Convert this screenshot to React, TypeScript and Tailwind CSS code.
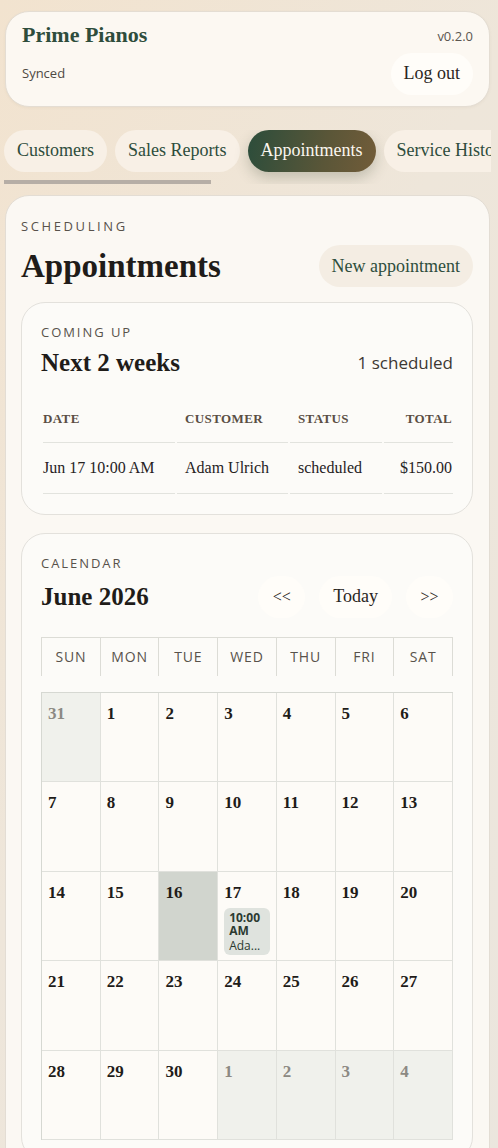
import { useState } from 'react';

const serif = "font-['Liberation_Serif',Georgia,serif]";
const sans = "font-['Open_Sans','Noto_Sans',sans-serif]";

type Appointment = {
  date: string;
  customer: string;
  status: string;
  total: string;
};

const upcoming: Appointment[] = [
  { date: 'Jun 17 10:00 AM', customer: 'Adam Ulrich', status: 'scheduled', total: '$150.00' },
];

const tabs = ['Customers', 'Sales Reports', 'Appointments', 'Service History'];
const weekdays = ['Sun', 'Mon', 'Tue', 'Wed', 'Thu', 'Fri', 'Sat'];

type Day = { n: number; outside?: boolean; today?: boolean; event?: { time: string; who: string } };

// June 2026 starts on a Monday; pad with May 31 and July 1-4
const days: Day[] = [
  { n: 31, outside: true },
  ...Array.from({ length: 30 }, (_, i) => ({ n: i + 1 }) as Day),
  { n: 1, outside: true },
  { n: 2, outside: true },
  { n: 3, outside: true },
  { n: 4, outside: true },
].map((d, i) => {
  if (i === 16) return { ...d, today: true };
  if (i === 17) return { ...d, event: { time: '10:00 AM', who: 'Ada...' } };
  return d;
});

const cellLine = 'border-b border-[#e2e3de]';

export default function App() {
  const [active, setActive] = useState('Appointments');

  return (
    <div className="min-h-screen w-[498px] overflow-hidden bg-[linear-gradient(120deg,#f2e3cf_0%,#eee6da_45%,#ebe6de_100%)] pl-[5px] pr-[8px] pt-[11px]">
      <header className="rounded-[24px] border border-[#e4ddd3] bg-[#fcf8f2] px-[16px] pb-[11px] pt-[12px] shadow-[0_1px_3px_rgba(120,100,70,0.06)]">
        <div className="flex items-start justify-between">
          <h1 className={`${serif} text-[22px] font-bold leading-[22px] text-[#2e4d3c]`}>Prime Pianos</h1>
          <span className={`${sans} mt-[3px] text-[13px] text-[#5b5650]`}>v0.2.0</span>
        </div>
        <div className="mt-[6px] flex items-center justify-between">
          <span className={`${sans} text-[13px] text-[#4e4943]`}>Synced</span>
          <button className={`${serif} h-[42px] rounded-full bg-[#fffdf9] px-[13px] text-[18px] text-[#2a2622]`}>
            Log out
          </button>
        </div>
      </header>

      <nav className="-ml-[1px] mt-[23px] w-[487px] overflow-hidden">
        <div className="flex w-max gap-[8px] pb-[8px]">
          {tabs.map((t) => (
            <button
              key={t}
              onClick={() => setActive(t)}
              className={
                active === t
                  ? `${serif} h-[42px] rounded-full bg-[linear-gradient(100deg,#2c4d3b,#5a5638_60%,#725c39)] px-[13px] text-[18px] text-[#fbf6ee] shadow-[0_6px_14px_rgba(60,70,50,0.25)]`
                  : `${serif} h-[42px] rounded-full bg-[#f8f0e6] px-[13px] text-[18px] text-[#2e4d3c]`
              }
            >
              {t}
            </button>
          ))}
        </div>
        <div className="h-[4px] w-[207px] bg-[#b6aea6]" />
      </nav>

      <main className="mt-[11px] rounded-[24px] border border-[#e3ddd4] bg-[#fbf8f3] pl-[15px] pr-[16px] pt-[21px]">
        <p className={`${sans} text-[13px] tracking-[0.2em] text-[#58524b]`}>SCHEDULING</p>
        <div className="mt-[9px] flex items-center justify-between">
          <h2 className={`${serif} text-[33px] font-bold leading-[40px] text-[#1f1c19]`}>Appointments</h2>
          <button className={`${serif} h-[42px] rounded-full bg-[#f4ede3] px-[13px] text-[18px] text-[#2e4d3c]`}>
            New appointment
          </button>
        </div>

        <section className="mt-[15px] rounded-[24px] border border-[#e3e1dc] bg-[#fcfbf8] px-[19px] pb-[20px] pt-[20px]">
          <p className={`${sans} text-[13px] tracking-[0.15em] text-[#58524b]`}>COMING UP</p>
          <div className="mt-[5px] flex items-center justify-between">
            <h3 className={`${serif} text-[25px] font-bold leading-[30px] text-[#1f1c19]`}>Next 2 weeks</h3>
            <span className={`${sans} text-[17px] text-[#3c3833]`}>1 scheduled</span>
          </div>
          <table className="mt-[31px] w-[414px] table-fixed border-separate border-spacing-x-[2px] border-spacing-y-0">
            <colgroup>
              <col className="w-[132px]" />
              <col className="w-[111px]" />
              <col className="w-[92px]" />
              <col />
            </colgroup>
            <thead>
              <tr className={`${serif} text-[13px] font-bold tracking-[0.03em] text-[#5a4e44]`}>
                <th className={`${cellLine} pb-[14px] text-left`}>DATE</th>
                <th className={`${cellLine} pb-[14px] pl-[8px] text-left`}>CUSTOMER</th>
                <th className={`${cellLine} pb-[14px] pl-[8px] text-left`}>STATUS</th>
                <th className={`${cellLine} pb-[14px] pr-[1px] text-right`}>TOTAL</th>
              </tr>
            </thead>
            <tbody>
              {upcoming.map((a) => (
                <tr key={a.date} className={`${serif} text-[16px] text-[#26221e]`}>
                  <td className={`${cellLine} h-[51px] whitespace-nowrap`}>{a.date}</td>
                  <td className={`${cellLine} pl-[8px]`}>{a.customer}</td>
                  <td className={`${cellLine} pl-[8px]`}>{a.status}</td>
                  <td className={`${cellLine} pr-[1px] text-right`}>{a.total}</td>
                </tr>
              ))}
            </tbody>
          </table>
        </section>

        <section className="mt-[18px] rounded-[24px] border border-[#e3e1dc] bg-[#fcfbf8] px-[19px] pb-[20px] pt-[20px]">
          <p className={`${sans} text-[13px] tracking-[0.15em] text-[#58524b]`}>CALENDAR</p>
          <div className="mt-[2px] flex items-center justify-between">
            <h3 className={`${serif} text-[25px] font-bold leading-[30px] text-[#1f1c19]`}>June 2026</h3>
            <div className="flex items-center gap-[14px]">
              <button className={`${serif} h-[42px] w-[47px] rounded-full bg-[#fffdf9] text-[16px] text-[#2a2622]`}>&lt;&lt;</button>
              <button className={`${serif} h-[42px] rounded-full bg-[#fffdf9] px-[14px] text-[18px] text-[#2a2622]`}>Today</button>
              <button className={`${serif} h-[42px] w-[47px] rounded-full bg-[#fffdf9] text-[16px] text-[#2a2622]`}>&gt;&gt;</button>
            </div>
          </div>

          <div className="mt-[19px] grid grid-cols-7 border-l border-t border-[#dcdcd6]">
            {weekdays.map((w) => (
              <div
                key={w}
                className={`${sans} flex h-[38px] items-center justify-center border-r border-[#dcdcd6] text-[14px] uppercase tracking-[0.06em] text-[#58524b]`}
              >
                {w}
              </div>
            ))}
          </div>

          <div className="mt-[16px] grid grid-cols-7 border-l border-t border-[#d6d8d2]">
            {days.map((d, i) => (
              <div
                key={i}
                className={
                  'h-[89.6px] border-b border-r border-[#e0e1dc] px-[6px] pt-[8px] ' +
                  (d.today ? 'bg-[#d1d5ce]' : d.outside ? 'bg-[#f0f1ec]' : 'bg-[#fdfbf7]')
                }
              >
                <span
                  className={`${serif} text-[17px] font-bold ${d.outside ? 'text-[#8c8983]' : 'text-[#1f1c19]'}`}
                >
                  {d.n}
                </span>
                {d.event && (
                  <div className={`${sans} mt-[3px] w-[46px] rounded-[6px] bg-[#dfe3de] px-[5px] py-[3px] text-[12px] leading-[13px] text-[#2b3a31]`}>
                    <div className="font-bold">{d.event.time}</div>
                    <div className="mt-[2px]">{d.event.who}</div>
                  </div>
                )}
              </div>
            ))}
          </div>
        </section>
        <div className="h-[20px]" />
      </main>
    </div>
  );
}
